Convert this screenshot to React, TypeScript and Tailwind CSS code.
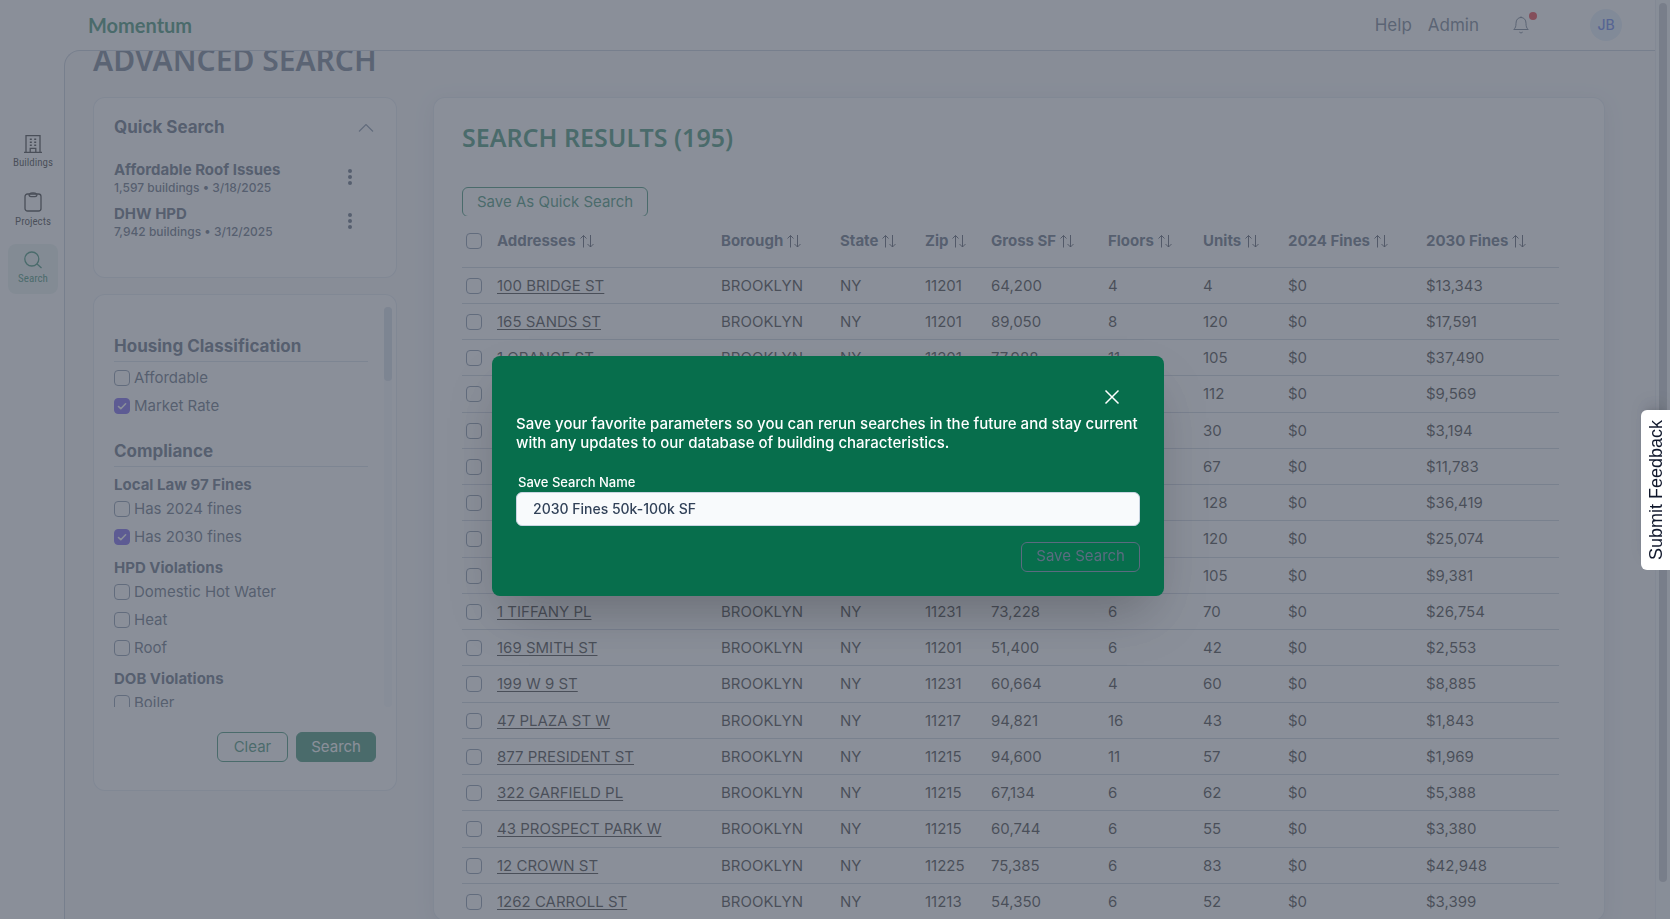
import { useState } from "react";

const COLUMNS = [
  { label: "Addresses", width: 224 },
  { label: "Borough", width: 119 },
  { label: "State", width: 85 },
  { label: "Zip", width: 66 },
  { label: "Gross SF", width: 117 },
  { label: "Floors", width: 95 },
  { label: "Units", width: 85 },
  { label: "2024 Fines", width: 138 },
  { label: "2030 Fines", width: 133 },
];

const BUILDINGS = [
  ["100 BRIDGE ST", "11201", "64,200", "4", "4", "$13,343"],
  ["165 SANDS ST", "11201", "89,050", "8", "120", "$17,591"],
  ["1 ORANGE ST", "11201", "77,988", "11", "105", "$37,490"],
  ["75 HENRY ST", "11201", "81,120", "9", "112", "$9,569"],
  ["60 PINEAPPLE ST", "11201", "58,300", "6", "30", "$3,194"],
  ["135 WILLOW ST", "11201", "66,410", "6", "67", "$11,783"],
  ["55 PIERREPONT ST", "11201", "92,700", "10", "128", "$36,419"],
  ["24 MONROE PL", "11201", "88,215", "9", "120", "$25,074"],
  ["57 MONTAGUE ST", "11201", "79,640", "8", "105", "$9,381"],
  ["1 TIFFANY PL", "11231", "73,228", "6", "70", "$26,754"],
  ["169 SMITH ST", "11201", "51,400", "6", "42", "$2,553"],
  ["199 W 9 ST", "11231", "60,664", "4", "60", "$8,885"],
  ["47 PLAZA ST W", "11217", "94,821", "16", "43", "$1,843"],
  ["877 PRESIDENT ST", "11215", "94,600", "11", "57", "$1,969"],
  ["322 GARFIELD PL", "11215", "67,134", "6", "62", "$5,388"],
  ["43 PROSPECT PARK W", "11215", "60,744", "6", "55", "$3,380"],
  ["12 CROWN ST", "11225", "75,385", "6", "83", "$42,948"],
  ["1262 CARROLL ST", "11213", "54,350", "6", "52", "$3,399"],
];

const QUICK_SEARCHES = [
  { name: "Affordable Roof Issues", details: "1,597 buildings • 3/18/2025" },
  { name: "DHW HPD", details: "7,942 buildings • 3/12/2025" },
];

function BuildingIcon() {
  return (
    <svg width="18" height="18" viewBox="0 0 18 18" fill="none" stroke="currentColor" strokeWidth="1.3">
      <path d="M0 17.3h18M2 17V.7h14V17M6.2 17v-3.7h5.6V17" />
      <path d="M5.8 4.3h2M5.8 7.3h2M5.8 10.3h2M10.2 4.3h2M10.2 7.3h2M10.2 10.3h2" strokeWidth="1.6" />
    </svg>
  );
}

function ClipboardIcon() {
  return (
    <svg width="18" height="20" viewBox="0 0 18 20" fill="none" stroke="currentColor" strokeWidth="1.3">
      <rect x="1" y="2" width="16" height="17" rx="2.5" />
      <path d="M5 2.2C5 4 5.6 4.6 7 4.6h4c1.4 0 2-.6 2-2.4M5.5 2C6.5.8 7.5.8 9 .8s2.5 0 3.5 1.2" />
    </svg>
  );
}

function SearchIcon() {
  return (
    <svg width="18" height="18" viewBox="0 0 18 18" fill="none" stroke="currentColor" strokeWidth="1.3">
      <circle cx="7.8" cy="8" r="7" />
      <path d="M12.8 12.8l4.7 4.2" />
    </svg>
  );
}

function SortIcon() {
  return (
    <svg
      width="14"
      height="14"
      viewBox="0 0 14 14"
      fill="none"
      stroke="currentColor"
      strokeWidth="0.9"
      className="text-slate-900"
      aria-hidden="true"
    >
      <path d="M3.5 13.5V1.5M.5 4.5l3-3 3 3M10.5 1v12M7.5 10l3 3 3-3" />
    </svg>
  );
}

function DotsIcon() {
  return (
    <svg width="4" height="16" viewBox="0 0 4 16" fill="currentColor">
      <circle cx="2" cy="2" r="2" />
      <circle cx="2" cy="8" r="2" />
      <circle cx="2" cy="14" r="2" />
    </svg>
  );
}

function CheckBox({ defaultChecked = false, label }: { defaultChecked?: boolean; label?: string }) {
  return (
    <span className="relative inline-flex size-4 shrink-0">
      <input
        type="checkbox"
        defaultChecked={defaultChecked}
        aria-label={label}
        className="peer size-4 appearance-none rounded border border-slate-500 checked:border-[#4c32e8] checked:bg-[#4c32e8]"
      />
      <svg
        viewBox="0 0 16 16"
        className="pointer-events-none absolute inset-0 hidden size-4 peer-checked:block"
        fill="none"
        stroke="white"
        strokeWidth="1.6"
        strokeLinecap="round"
        strokeLinejoin="round"
      >
        <path d="M4.5 8.5l2.3 2.2 4.8-4.9" />
      </svg>
    </span>
  );
}

function Tick({ label, checked = false }: { label: string; checked?: boolean }) {
  return (
    <label className="mb-2 flex h-5 items-center gap-1 text-[15px] text-slate-700">
      <CheckBox defaultChecked={checked} />
      {label}
    </label>
  );
}

function Header() {
  return (
    <header className="flex h-[50px] shrink-0 items-center bg-white pl-[88px] pr-[33px]">
      <a href="#" className="flex-1 font-['Lato',sans-serif] text-xl font-bold leading-6 text-[#00704a]">
        Momentum
      </a>
      <nav className="flex gap-4 text-[17px] leading-6 text-slate-600">
        <a href="#">Help</a>
        <a href="#">Admin</a>
      </nav>
      <button type="button" aria-label="Notifications" className="relative ml-[34px] text-slate-600">
        <svg width="16" height="18" viewBox="0 0 16 18" fill="none" stroke="currentColor" strokeWidth="1">
          <path d="M.8 13.5c1.7-1.6 2.2-3.2 2.2-6.2C3 3.8 5 1.5 8 1.5s5 2.3 5 5.8c0 3 .5 4.6 2.2 6.2zM7 1.2h2M6.3 16c.8 1.2 2.6 1.2 3.4 0" />
        </svg>
        <span className="absolute -top-1 left-4 size-2 rounded-full bg-red-600" />
      </button>
      <button
        type="button"
        className="ml-[61px] size-8 rounded-full bg-[#dbeafa] text-sm font-medium text-[#3358e8]"
      >
        JB
      </button>
    </header>
  );
}

function Sidebar() {
  const item = "flex h-[50px] w-[50px] flex-col items-center justify-center gap-0.5 rounded-lg";
  return (
    <nav className="flex w-16 shrink-0 flex-col items-center gap-2 bg-white pl-0.5 pt-[78px] font-['Roboto_Condensed','Liberation_Sans_Narrow',sans-serif] text-[11px] leading-4 text-black">
      <a href="#" className={item}>
        <BuildingIcon />
        Buildings
      </a>
      <a href="#" className={item}>
        <ClipboardIcon />
        Projects
      </a>
      <a href="#" className={`${item} bg-[#e2eeec] text-[#00704a]`}>
        <SearchIcon />
        Search
      </a>
    </nav>
  );
}

function QuickSearch() {
  return (
    <section className="h-[181px] rounded-xl border border-slate-300/70 bg-white px-5 pt-4.5">
      <div className="flex h-6 items-center justify-between pr-0.5">
        <h2 className="text-[17px] font-bold text-slate-700">Quick Search</h2>
        <button type="button" aria-label="Collapse" className="text-slate-500">
          <svg width="16" height="8" viewBox="0 0 16 8" fill="none" stroke="currentColor" strokeWidth="1.2">
            <path d="M1 7.5l7-7 7 7" />
          </svg>
        </button>
      </div>
      <ul className="mt-[21px] flex flex-col gap-2">
        {QUICK_SEARCHES.map((q) => (
          <li key={q.name} className="flex items-start justify-between pr-6 text-slate-700">
            <div>
              <p className="text-[15px] font-bold leading-[18px]">{q.name}</p>
              <p className="text-xs font-medium leading-[18px]">{q.details}</p>
            </div>
            <button type="button" aria-label={`Options for ${q.name}`} className="mt-2">
              <DotsIcon />
            </button>
          </li>
        ))}
      </ul>
    </section>
  );
}

function Filters() {
  const heading = "mb-1.5 border-b border-slate-300 pb-[3px] text-[17px] font-bold leading-6 text-slate-700";
  const group = "mb-1 pt-0.5 text-[15px] font-bold leading-5 text-slate-700";
  return (
    <section className="mt-4 rounded-xl border border-slate-300/70 bg-white pb-7 pr-1 pt-3">
      <div className="flex h-[400px] overflow-hidden">
        <div className="flex-1 pl-5 pt-[27px]">
          <h2 className={heading}>Housing Classification</h2>
          <Tick label="Affordable" />
          <Tick label="Market Rate" checked />
          <h2 className={`${heading} mt-[23px]`}>Compliance</h2>
          <h3 className={group}>Local Law 97 Fines</h3>
          <Tick label="Has 2024 fines" />
          <Tick label="Has 2030 fines" checked />
          <h3 className={`${group} mt-[9px]`}>HPD Violations</h3>
          <Tick label="Domestic Hot Water" />
          <Tick label="Heat" />
          <Tick label="Roof" />
          <h3 className={`${group} mt-[9px]`}>DOB Violations</h3>
          <Tick label="Boiler" />
        </div>
        <div className="ml-4 w-2 rounded-full bg-slate-100">
          <div className="h-[74px] rounded-full bg-slate-300" />
        </div>
      </div>
      <div className="mt-[25px] flex justify-end gap-2 pr-4">
        <button
          type="button"
          className="h-[30px] rounded-md border border-[#00704a] px-4 text-[15px] text-[#00704a]"
        >
          Clear
        </button>
        <button
          type="button"
          className="h-[30px] rounded-md border border-[#00704a] bg-[#00704a] px-3.5 text-[15px] text-white"
        >
          Search
        </button>
      </div>
    </section>
  );
}

function Results() {
  return (
    <section className="min-w-0 flex-1 rounded-xl border border-slate-300/70 bg-white pl-7 pr-[45px] pt-[23px] shadow-[0_4px_20px_rgba(30,41,80,0.12)]">
      <h2 className="font-['Noto_Sans'] text-[25px] font-semibold leading-8 text-[#00704a]">SEARCH RESULTS (195)</h2>
      <div className="mt-[34px] h-[29px] overflow-hidden">
        <button type="button" className="h-[30px] rounded-md border border-[#00704a] px-3.5 text-[15px] text-[#00704a]">
          Save As Quick Search
        </button>
      </div>
      <table className="w-full table-fixed border-collapse text-left text-[15px] text-black">
        <colgroup>
          <col width={35} />
          {COLUMNS.map((c) => (
            <col key={c.label} width={c.width} />
          ))}
        </colgroup>
        <thead>
          <tr className="h-[51px] border-b border-[#bcc6d4] text-slate-700">
            <th className="pl-1 align-middle">
              <span className="flex">
                <CheckBox label="Select all" />
              </span>
            </th>
            {COLUMNS.map((c) => (
              <th key={c.label} className="font-bold">
                <button type="button" className="flex items-center gap-1 whitespace-nowrap">
                  {c.label}
                  <SortIcon />
                </button>
              </th>
            ))}
          </tr>
        </thead>
        <tbody>
          {BUILDINGS.map(([address, zip, area, floors, units, fines]) => (
            <tr key={address} className="h-9 whitespace-nowrap border-b border-[#bcc6d4] nth-[4n]:h-[37px]">
              <td className="pl-1 pt-px">
                <span className="flex">
                  <CheckBox label={`Select ${address}`} />
                </span>
              </td>
              <td className="pt-0.5">
                <a href="#" className="underline underline-offset-2">
                  {address}
                </a>
              </td>
              <td className="pt-0.5">BROOKLYN</td>
              <td className="pt-0.5">NY</td>
              <td className="pt-0.5">{zip}</td>
              <td className="pt-0.5">{area}</td>
              <td className="pt-0.5">{floors}</td>
              <td className="pt-0.5">{units}</td>
              <td className="pt-0.5">$0</td>
              <td className="pt-0.5">{fines}</td>
            </tr>
          ))}
        </tbody>
      </table>
    </section>
  );
}

function SaveSearchModal() {
  const [name, setName] = useState("2030 Fines 50k-100k SF");

  return (
    <div className="fixed inset-0 z-10 flex items-center justify-center bg-[#636977]/75 pr-3.5 pt-8">
      <form
        role="dialog"
        aria-label="Save search"
        onSubmit={(e) => e.preventDefault()}
        className="flex w-full max-w-2xl flex-col rounded-lg bg-[#076e4c] px-6 pb-6 pt-[33px] font-medium text-white shadow-2xl"
      >
        <button type="button" aria-label="Close" className="mr-5 self-end">
          <svg width="16" height="16" viewBox="0 0 16 16" fill="none" stroke="currentColor" strokeWidth="1.5">
            <path d="M1.5 1.5l13 13M14.5 1.5l-13 13" />
          </svg>
        </button>
        <p className="mt-[9px] text-[15px] leading-[19px]">
          Save your favorite parameters so you can rerun searches in the future and stay current with any updates to our
          database of building characteristics.
        </p>
        <label htmlFor="search-name" className="ml-0.5 mt-5 text-[13px] leading-5">
          Save Search Name
        </label>
        <input
          id="search-name"
          type="text"
          value={name}
          onChange={(e) => setName(e.target.value)}
          className="h-[34px] rounded-md border border-slate-300 bg-slate-50 px-4 text-sm text-slate-700 outline-none"
        />
        <button
          type="submit"
          className="mt-4 h-[30px] self-end rounded-md border border-[#5b6b80] px-3.5 text-[15px] font-normal text-[#5b6b80]"
        >
          Save Search
        </button>
      </form>
    </div>
  );
}

export default function App() {
  return (
    <div className="flex h-screen overflow-hidden bg-white font-['Inter',sans-serif]">
      <div className="flex min-w-0 flex-1 flex-col">
        <Header />
        <div className="flex min-h-0 flex-1">
          <Sidebar />
          <main className="min-w-0 flex-1 overflow-hidden rounded-tl-2xl border-l border-t border-[#b4bfce] bg-[#f5f6f8] pl-7 pr-[50px]">
            <h1 className="-mt-[9px] font-['Noto_Sans'] text-3xl font-semibold leading-9 text-slate-600">
              ADVANCED SEARCH
            </h1>
            <div className="mt-[19px] flex items-start gap-9">
              <div className="w-76 shrink-0">
                <QuickSearch />
                <Filters />
              </div>
              <Results />
            </div>
          </main>
        </div>
      </div>
      <div className="w-[15px] shrink-0 border-l border-slate-200 bg-slate-50 px-[3px] pt-[3px]">
        <div className="h-[96%] rounded-full bg-[#b8bcc2]" />
      </div>
      <SaveSearchModal />
      <button
        type="button"
        className="fixed right-0 top-[410px] z-20 flex h-40 w-[29px] rotate-180 items-center justify-center rounded-r-md bg-white font-['Liberation_Sans',sans-serif] text-lg text-slate-900 shadow-lg [writing-mode:vertical-rl]"
      >
        Submit Feedback
      </button>
    </div>
  );
}
